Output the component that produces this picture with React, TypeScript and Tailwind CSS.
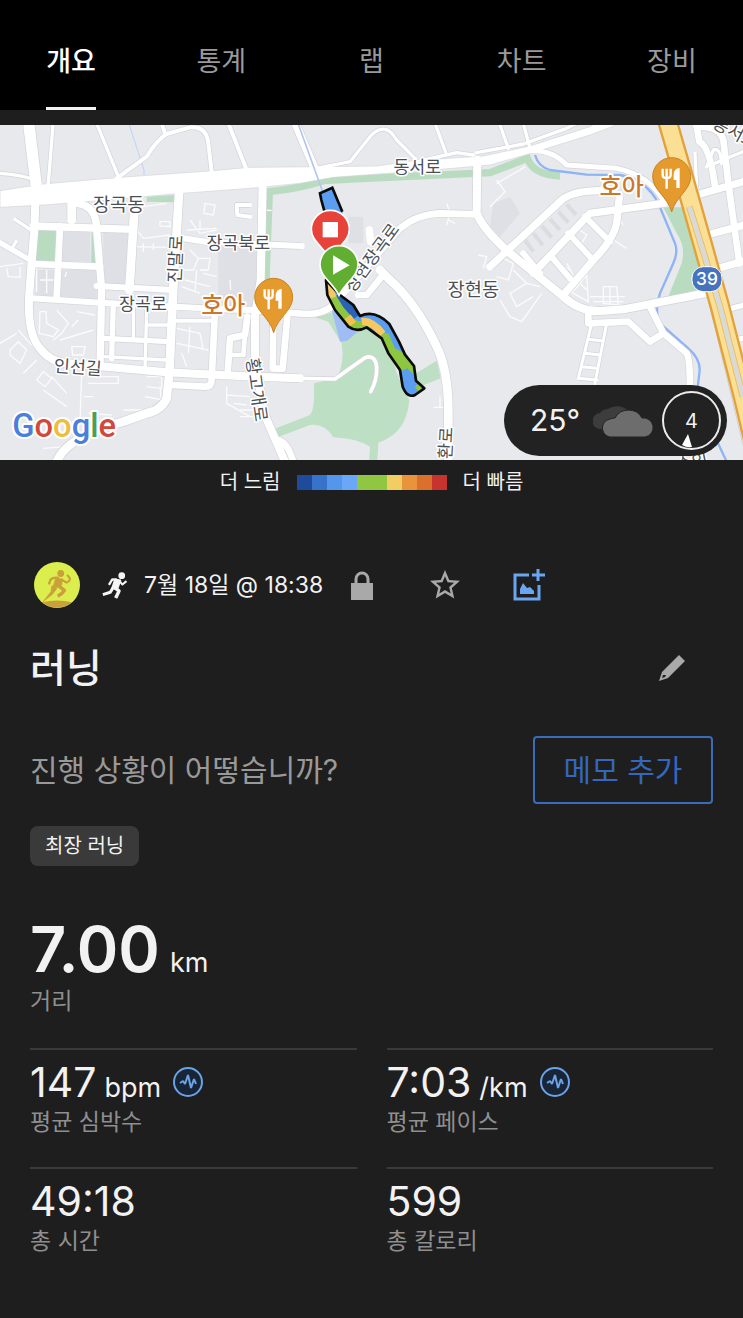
import { useState } from "react";
import { MdStarBorder } from "react-icons/md";

const tabs = ["개요", "통계", "랩", "차트", "장비"];

const paceColors = [
  { id: 1, className: "bg-[#1f4b9c]" },
  { id: 2, className: "bg-[#3773cb]" },
  { id: 3, className: "bg-[#5496eb]" },
  { id: 4, className: "bg-[#6aa8f7]" },
  { id: 5, className: "bg-[#8fc743]" },
  { id: 6, className: "bg-[#8fc743]" },
  { id: 7, className: "bg-[#f2cd62]" },
  { id: 8, className: "bg-[#e9933d]" },
  { id: 9, className: "bg-[#db702d]" },
  { id: 10, className: "bg-[#c6342d]" },
];

const stats = [
  { label: "평균 심박수", value: "147", unit: "bpm", chart: true },
  { label: "평균 페이스", value: "7:03", unit: "/km", chart: true },
  { label: "총 시간", value: "49:18" },
  { label: "총 칼로리", value: "599" },
];

// map roads, drawn twice: grey casing first, then the white surface
const roads = [
  { w: 34, d: "M85,0 L108,190" },
  { w: 24, d: "M108,190 L103,330 L97,400 L88,520 Q80,640 120,685 Q150,725 200,730 L500,757 L765,770 L900,775" },
  { w: 11, d: "M900,775 L1005,777 L1095,713 Q1125,703 1130,740 Q1132,780 1112,815" },
  { w: 22, d: "M100,318 L400,328" },
  { w: 26, d: "M405,240 L395,400 L388,510" },
  { w: 20, d: "M100,432 L300,440" },
  { w: 20, d: "M180,320 L170,530" },
  { w: 26, d: "M215,250 L215,300" },
  { w: 22, d: "M230,250 Q290,255 290,330 L305,510 L300,740" },
  { w: 18, d: "M290,498 L520,510" },
  { w: 18, d: "M95,535 L300,548 L640,566" },
  { w: 20, d: "M640,566 L750,570 L920,582 Q970,582 1000,555 L1200,325 Q1250,283 1320,280 L1430,283" },
  { w: 20, d: "M1075,525 L1100,525 L1145,470" },
  { w: 26, d: "M1140,450 L1170,480 Q1250,550 1315,690 Q1345,760 1345,880 L1345,1020" },
  { w: 24, d: "M1432,120 L1430,280 Q1450,330 1530,400 L1690,530 Q1740,575 1800,573 L1870,568 L2125,518" },
  { w: 26, d: "M538,205 L520,500 L508,760 L500,835 Q485,870 440,880 L370,905 Q200,950 170,1025" },
  { w: 18, d: "M550,355 L620,366 L905,378" },
  { w: 24, d: "M788,190 L782,480 L765,590 L765,720 L792,880 L855,1025" },
  { w: 20, d: "M830,960 Q860,960 880,1025" },
  { w: 20, d: "M820,600 L818,745 L848,746 L862,590" },
  { w: 20, d: "M645,570 L635,780 Q635,800 615,800 L515,795" },
  { w: 20, d: "M683,760 L690,655 L735,645 L742,590" },
  { w: 14, d: "M735,645 L730,705 L695,705" },
  { w: 12, d: "M520,602 L635,602" },
  { w: 16, d: "M340,550 L335,715" },
  { w: 16, d: "M310,655 L510,665" },
  { w: 10, d: "M310,710 L500,720" },
  { w: 10, d: "M400,560 L400,655 M440,570 L435,750 M440,615 L505,615" },
  { w: 10, d: "M160,0 L145,190 M290,10 L355,170 M0,160 Q70,165 105,180" },
  { w: 12, d: "M350,175 L440,110 Q470,60 500,42 L570,22 Q620,18 625,70 L635,155 M485,10 L495,40 M685,10 L738,145" },
  { w: 16, d: "M0,368 L90,420" },
  { w: 10, d: "M45,298 L90,328 M38,382 L48,365" },
  { w: 10, d: "M950,145 L1050,125 L1110,50 Q1155,0 1190,60 L1245,115 M1305,10 L1340,105 M1250,125 L1370,98 L1420,105" },
  { w: 24, d: "M886,10 L948,155" },
  { w: 10, d: "M1430,98 L1570,72 L1700,25 L1750,0 M1500,15 L1525,85 M1570,10 L1590,85" },
  { w: 12, d: "M750,255 L710,255 L712,285 L750,290" },
  { w: 22, d: "M1470,440 L1685,240 Q1720,212 1800,212" },
  { w: 22, d: "M1600,460 L1770,280 L1990,250" },
  { w: 22, d: "M1858,230 L1850,310 Q1840,360 1780,420 L1690,525" },
  { w: 18, d: "M1570,400 L1620,460 M1650,405 L1710,475 M1705,340 L1770,410 M1755,290 L1830,365" },
  { w: 15, d: "M1600,92 Q1660,92 1700,135 L1850,145 Q1950,165 1995,250" },
  { w: 20, d: "M1765,575 L1765,610 L1885,605 L1950,665 L1990,640 L1950,560 M1990,640 L2060,700 Q2070,715 2070,810" },
  { w: 9, d: "M1775,610 L1735,775 M1820,610 L1785,790 M1765,658 L1810,663 M1755,700 L1800,705 M1745,740 L1790,745 M1735,775 L1790,780" },
  { w: 22, d: "M2080,228 L2229,185 M2110,348 L2229,316 M2150,446 L2229,424" },
  { w: 16, d: "M2175,570 L2229,556 M2205,660 L2229,655" },
  { w: 20, d: "M2090,20 L2098,65 Q2130,80 2145,200 M2100,20 Q2160,20 2170,60 L2185,190 L2218,430" },
  { w: 10, d: "M2085,100 L2090,205 M2145,130 L2229,95 M2120,140 L2140,90 Q2160,80 2165,130" },
];

const lanes =
  "M20,445 L25,470 L60,472 L60,440 M0,440 L70,430 M110,445 L110,515 M140,450 L140,520 M120,480 L165,480 M200,455 L195,470 M120,575 L118,640 L160,650 L175,630 L140,610 L138,575 Z M170,570 L205,610 L185,640 L160,660 M230,575 L285,585 M235,600 L215,620 M180,660 L280,630 M215,680 L255,680 L250,705 L218,705 Z M55,630 L90,670 L150,720 M0,670 L50,640 M30,690 L55,665 L80,690 L60,730 L30,705 Z M70,760 L110,720 M110,780 L130,755 L155,775 L135,800 Z M130,810 L200,860 M155,770 L200,820 M245,760 L240,900 M265,770 L355,770 L355,790 L265,790 M250,830 L280,830 M265,880 L335,885 M440,770 L485,770 L485,805 L440,800 M480,800 L485,855 M435,830 L490,840 M370,870 L440,870 M430,260 L500,250 M410,330 L430,355 L510,345 M410,380 L500,382 M480,305 L510,305 L510,320 L480,318 Z M430,370 L430,395 M460,370 L460,390 M615,250 L645,255 L640,285 L612,280 Z M570,300 L600,340 L650,330 M600,300 L600,330 M560,330 L650,325 M570,390 L595,415 L580,450 L550,450 M595,415 L630,415 L625,450 L600,450 M590,450 L585,515 M555,480 L630,500 M610,460 L650,470 M545,500 L600,520 M530,625 L600,640 M570,620 L565,700 M530,670 L625,690 M600,640 L610,690 M545,700 L560,740 M680,800 L680,850 L750,890 M680,825 L750,830 M700,850 L740,855 M690,480 L692,510 M795,270 L815,272 M1340,250 L1350,280 L1340,315 M1345,300 L1365,310 M1435,405 L1460,410 L1450,445 M1320,830 L1320,865 M1300,862 L1330,862 M1500,410 L1540,430 L1525,480 L1490,470 M1500,540 L1530,590 L1565,605 L1625,520 M1540,450 L1580,490 L1530,520 L1550,560 M1580,490 L1620,500 M1550,560 L1600,530 M1490,190 L1560,150 L1575,140 M1490,180 L1515,215 L1470,260 M1740,330 L1760,345 L1745,370 M1690,440 L1710,450 M1700,430 L1720,465 M1715,520 L1760,465 L1765,545 L1720,520 M1740,490 L1760,510 M1810,500 L1850,500 L1855,555 L1810,550 Z M1770,530 L1875,530 M1780,545 L1870,545 M1830,500 L1830,550 M1840,360 L1880,385 M1860,300 L1870,315 M720,870 L760,870 M720,890 L780,890 M130,985 L200,980";

const hatch =
  "M1575,360 L1600,395 M1600,340 L1628,375 M1625,318 L1655,352 M1650,297 L1680,330 M1675,275 L1705,308 M1700,253 L1728,284";

const river =
  "M1605,105 Q1615,140 1650,150 L1760,164 L1860,165 Q1940,180 1975,250 L2025,370 Q2035,395 2020,430 L1980,520 Q1960,580 1985,615 L2065,685 Q2105,720 2098,760 L2092,810 L2140,940 L2180,1025";

const highway = "M2000,-5 L2045,150 L2110,380 L2160,560 L2229,830 L2265,980";

const trackOutline =
  "M978,480 L982,525 L1005,570 L1045,620 Q1070,638 1100,622 L1145,655 L1165,700 L1200,750 L1208,800 Q1222,835 1245,825 L1273,805 L1248,782 L1242,738 L1215,704 L1197,665 L1168,612 Q1125,568 1080,588 L1060,555 L1020,525 Z";

const Pin = ({ x, y, fill, children }: { x: number; y: number; fill: string; children: React.ReactNode }) => (
  <g transform={`translate(${x} ${y})`}>
    <path
      d="M-57,0 A57,57 0 0 1 57,0 C57,36 20,52 0,92 C-20,52 -57,36 -57,0 Z"
      fill={fill}
      stroke="#fff"
      strokeWidth="5"
    />
    {children}
  </g>
);

const FoodPin = ({ x, y }: { x: number; y: number }) => (
  <g transform={`translate(${x} ${y})`}>
    <path
      d="M-57,0 A57,57 0 0 1 57,0 C57,40 12,60 0,106 C-12,60 -57,40 -57,0 Z"
      fill="#e59a2e"
      stroke="#c98422"
      strokeWidth="3"
    />
    <path
      d="M-27,-24 V-6 Q-27,4 -15,4 Q-3,4 -3,-6 V-24 M-15,-24 V36"
      fill="none"
      stroke="#fff"
      strokeWidth="7"
    />
    <path d="M24,-26 V34 H14 V10 H6 V-8 Q8,-24 24,-26 Z" fill="#fff" />
  </g>
);

const ActivityMap = () => (
  <svg viewBox="0 15 2229 1005" className="block w-full" role="img" aria-label="지도">
    <defs>
      <clipPath id="track">
        <path d={trackOutline} />
      </clipPath>
    </defs>
    <rect y="15" width="2229" height="1005" fill="#e8e9ed" />

    {/* city blocks */}
    <path
      d="M310,335 H385 L378,495 L310,490 Z M190,335 H270 V425 H186 Z M110,450 H290 V540 H105 Z M655,380 H770 V560 H655 Z M1480,250 L1530,230 L1560,280 L1500,350 L1470,320 Z M1045,290 H1090 V370 H1045 Z"
      fill="#dfe0e5"
    />
    <path d="M110,330 L170,333 L165,425 L105,420 Z" fill="#b9dcc0" />
    <path d="M275,335 L288,350 L288,430 L273,430 Z M440,230 L525,225 L525,247 L440,245 Z" fill="#b9dcc0" />
    <path
      d="M798,480 L808,215 Q900,205 970,182 L1100,175 L1470,158 L1582,115 Q1600,165 1680,168"
      fill="none"
      stroke="#b9dcc0"
      strokeWidth="22"
    />
    <path
      d="M945,592 L1005,575 L1060,610 L1160,630 L1190,760 L1228,840 Q1220,940 1135,968 L1132,1020 L1108,1020 L1110,980 Q1070,955 1000,952 Q975,910 930,915 L825,955 L815,930 L930,885 Q945,870 942,790 L1010,775 Q1035,730 1025,670 L985,605 Z"
      fill="#bddfc4"
    />
    <path d="M1240,765 L1310,722 L1322,775 L1255,802 Z" fill="#bddfc4" />
    <path d="M995,570 L1085,625 L1042,662 L1020,665 Z" fill="#9fbcf6" />
    <path d="M1990,262 L2060,262 L2130,515 L2005,530 L2045,430 Q2058,380 2030,340 Z" fill="#b9dcc0" />
    <path d={river} fill="none" stroke="#8db4f5" strokeWidth="7" />
    <path d="M388,15 L432,150 L432,165" fill="none" stroke="#bcd3f5" strokeWidth="3" />
    <path d="M2125,540 L2240,1020" stroke="#cfd2d6" strokeWidth="3" />

    <path d={lanes} fill="none" stroke="#fbfbfc" strokeWidth="4" />

    {roads.map((road) => (
      <path key={road.d} d={road.d} fill="none" stroke="#d2d4d9" strokeWidth={road.w + 4} strokeLinejoin="round" />
    ))}
    <path
      d="M0,212 L130,192 L360,172 L640,152 L750,142 L960,140 L1130,138 L1240,122 L1450,108 L1590,78 L1770,20 L1800,0 L1890,0 L1770,45 L1600,98 L1470,135 L1300,150 L1000,172 L900,190 L750,205 L520,222 L250,246 L130,255 L0,262 Z"
      fill="#fff"
      stroke="#d2d4d9"
      strokeWidth="2"
    />
    {roads.map((road) => (
      <path
        key={road.d}
        d={road.d}
        fill="none"
        stroke="#fff"
        strokeWidth={road.w}
        strokeLinejoin="round"
        strokeLinecap="round"
      />
    ))}
    <path d={hatch} stroke="#dadce0" strokeWidth="12" />
    <path d="M1108,330 L1112,365" stroke="#fff" strokeWidth="22" strokeLinecap="round" />
    <path d="M896,15 L968,215" stroke="#b4c5ee" strokeWidth="5" />

    {/* highway 39 */}
    <path d={highway} fill="none" stroke="#e2a13a" strokeWidth="62" />
    <path d={highway} fill="none" stroke="#fadf94" strokeWidth="48" />
    <path d="M2068,260 L2110,395 L2160,560 L2229,830" fill="none" stroke="#e9bb5c" strokeWidth="20" />
    <path d="M2068,260 L2110,395 L2160,560 L2229,830" fill="none" stroke="#d9dad6" strokeWidth="15" />

    <g
      fill="#4c4f54"
      stroke="#fff"
      strokeWidth="9"
      strokeLinejoin="round"
      paintOrder="stroke"
      fontSize="52"
      textAnchor="middle"
    >
      <text x="356" y="274" fontSize="56">장곡동</text>
      <text x="715" y="386">장곡북로</text>
      <text x="429" y="570">장곡로</text>
      <text transform="translate(232 760) rotate(4)">인선길</text>
      <text x="1252" y="160">동서로</text>
      <text x="1420" y="528" fontSize="56">장현동</text>
      <text transform="translate(545 418) rotate(-87)">진말로</text>
      <text transform="translate(1130 424) rotate(-54)">장현장곡로</text>
      <text transform="translate(752 812) rotate(82)">황고개로</text>
      <text transform="translate(1356 970) rotate(-87)">환로</text>
      <text transform="translate(2198 55) rotate(28)">동서로</text>
      <text transform="translate(2080 1044) rotate(-12)">수인</text>
    </g>
    <g
      fill="#cd772b"
      stroke="#fff"
      strokeWidth="10"
      strokeLinejoin="round"
      paintOrder="stroke"
      fontSize="72"
      fontWeight="500"
      textAnchor="middle"
    >
      <text x="670" y="582">호아</text>
      <text x="1865" y="224">호아</text>
    </g>

    {/* recorded track */}
    <path d="M960,220 L997,203 L1027,275 L1030,310 L985,310 L964,240 Z" fill="#5b9df0" />
    <path d="M975,280 L964,240 L960,220 L997,203 L1027,275" fill="none" stroke="#0b0b0b" strokeWidth="8" />
    <g clipPath="url(#track)">
      <rect x="960" y="470" width="330" height="380" fill="#5b9df0" />
      <path d="M1020,520 L1070,590" stroke="#2a62b8" strokeWidth="36" />
      <path
        d="M980,480 L990,535 L1015,575 L1050,615 L1080,625 L1110,622"
        fill="none"
        stroke="#8dc63f"
        strokeWidth="40"
      />
      <path d="M978,490 L995,535" stroke="#f2c766" strokeWidth="30" />
      <path d="M1042,608 L1060,595" stroke="#f2c24e" strokeWidth="28" />
      <path d="M1135,640 L1165,640 L1185,685 L1250,720 L1250,775 L1222,745 L1190,760 Z" fill="#8dc63f" />
      <path d="M1085,605 Q1115,600 1148,642" fill="none" stroke="#f5c860" strokeWidth="22" />
      <path d="M1245,800 L1262,785 L1280,800 L1268,820 L1252,812 Z" fill="#8dc63f" />
    </g>
    <path d={trackOutline} fill="none" stroke="#0b0b0b" strokeWidth="8" strokeLinejoin="round" />

    <FoodPin x={821} y={532} />
    <FoodPin x={2015} y={170} />
    <Pin x={991} y={328} fill="#e8433a">
      <rect x="-23" y="-22" width="46" height="46" fill="#fff" />
    </Pin>
    <Pin x={1017} y={434} fill="#61ae30">
      <path d="M-18,-28 L32,2 L-18,30 Z" fill="#fff" />
    </Pin>

    <rect x="2076" y="440" width="90" height="75" rx="34" fill="#4673bd" stroke="#fff" strokeWidth="3" />
    <text x="2121" y="496" fill="#fff" fontSize="52" fontWeight="500" textAnchor="middle">39</text>

    <text
      x="37"
      y="952"
      className="font-['Roboto']"
      fontSize="98"
      fontWeight="500"
      stroke="#fff"
      strokeWidth="12"
      strokeLinejoin="round"
      paintOrder="stroke"
    >
      <tspan fill="#4a7fdc">G</tspan>
      <tspan fill="#d0493c">o</tspan>
      <tspan fill="#edbd3e">o</tspan>
      <tspan fill="#4a7fdc">g</tspan>
      <tspan fill="#4a9f58">l</tspan>
      <tspan fill="#d0493c">e</tspan>
    </text>
  </svg>
);

const Weather = () => (
  <div className="absolute right-4 bottom-1 flex h-[71px] w-[223px] items-center justify-between rounded-full bg-[#222222] pr-[6px] pl-[26px] text-[#f2f2f2]">
    <span className="text-[30px]">25°</span>
    <svg viewBox="0 0 60 34" className="ml-1 h-[34px] w-[60px]">
      <path d="M8,25 A8,8 0 0 1 7,9 A10,10 0 0 1 15,5 A14,12 0 0 1 35,7 L30,25 Z" fill="#3d3d3d" />
      <path
        d="M20,33 A9,9 0 0 1 17,15 Q20,14 22,14 A15,14 0 0 1 49,14 A9,9 0 0 1 52,33 Z"
        fill="#6d6d6d"
        stroke="#222222"
        strokeWidth="1"
      />
    </svg>
    <span className="relative flex size-[59px] items-center justify-center rounded-full border-2 border-[#ececec] text-xl">
      4
      <svg viewBox="0 0 10 14" className="absolute bottom-0 left-[18px] h-[14px] w-[10px]">
        <path d="M6,0 L10,13 Q5,14 0,11 Z" fill="#fff" />
      </svg>
    </span>
  </div>
);

const ChartIcon = () => (
  <svg viewBox="0 0 30 30" className="size-[30px]" fill="none" stroke="#6ba3e8">
    <circle cx="15" cy="15" r="14" strokeWidth="2" fill="#182536" />
    <path d="M7,16 L10,14 L12,17 L15,8 L18,21 L21,12 L23,17" strokeWidth="2" strokeLinejoin="bevel" />
  </svg>
);

const Avatar = () => (
  <svg viewBox="0 0 136 136" className="size-[46px]">
    <circle cx="68" cy="68" r="68" fill="#dcee4e" />
    <path d="M24,119 Q68,108 112,119 A68,68 0 0 1 24,119 Z" fill="#c9a03a" />
    <g fill="none" stroke="#c9a03a" strokeLinejoin="round">
      <circle cx="79" cy="34" r="10" fill="#c9a03a" stroke="none" />
      <path d="M74,47 Q57,44 49,52 L44,66" strokeWidth="7" />
      <path d="M82,52 L96,61 Q107,57 106,48 L98,38" strokeWidth="6" />
      <path d="M64,48 L84,50 L82,68 L66,76 L57,72 Z" fill="#c9a03a" strokeWidth="2" />
      <path d="M72,70 L90,84 Q84,94 70,101" strokeWidth="10" />
      <path d="M53,70 L68,78 L54,96 L27,117 L50,88 Z" fill="#c9a03a" strokeWidth="2" />
    </g>
  </svg>
);

const Runner = () => (
  <svg viewBox="0 0 76 80" className="h-[27px] w-[26px]" fill="none" stroke="#f5f5f5" strokeLinejoin="round">
    <circle cx="58" cy="11" r="10" fill="#f5f5f5" stroke="none" />
    <path d="M44,23 L30,22 L20,38" strokeWidth="7" />
    <path d="M52,28 L60,37 L72,27" strokeWidth="6" />
    <path d="M38,22 L54,25 L46,48 L30,46 Z" fill="#f5f5f5" strokeWidth="5" />
    <path d="M36,46 L50,56 L40,77" strokeWidth="10" />
    <path d="M34,44 L24,60 L2,67" strokeWidth="9" />
  </svg>
);

const App = () => {
  const [activeTab, setActiveTab] = useState("개요");

  return (
    <div className="min-h-screen overflow-hidden bg-[#1e1e1e] pb-12 font-['Inter','Noto_Sans_CJK_KR',sans-serif] text-[#f2f2f2]">
      <header className="bg-black pt-[38px]">
        <nav className="-mx-1 grid grid-cols-5 justify-items-center">
          {tabs.map((tab) => (
            <button
              key={tab}
              onClick={() => setActiveTab(tab)}
              className={
                tab === activeTab
                  ? "border-b-3 border-[#f2f2f2] pb-[21px] text-[27px] leading-[48px] font-medium text-white"
                  : "border-b-3 border-transparent pb-[21px] text-[27px] leading-[48px] text-[#9a9a9a]"
              }
            >
              {tab}
            </button>
          ))}
        </nav>
      </header>

      <section className="relative mt-[15px]">
        <ActivityMap />
        <Weather />
      </section>

      <div className="flex h-11 items-center justify-center gap-4 text-xl">
        <span>더 느림</span>
        <div className="flex">
          {paceColors.map((color) => (
            <span key={color.id} className={`h-[15px] w-[15px] ${color.className}`} />
          ))}
        </div>
        <span>더 빠름</span>
      </div>

      <main className="px-[30px]">
        <div className="mt-14 flex h-[50px] items-center pl-1">
          <Avatar />
          <div className="ml-[22px]">
            <Runner />
          </div>
          <span className="ml-4 text-[23px]">7월 18일 @ 18:38</span>
          <button aria-label="개인정보" className="ml-7">
            <svg viewBox="0 0 22 29" className="h-[29px] w-[22px]">
              <rect y="12" width="22" height="17" fill="#a9a9a9" />
              <path d="M5,13 V8 A6,6 0 0 1 17,8 V13" fill="none" stroke="#a9a9a9" strokeWidth="3" />
            </svg>
          </button>
          <button aria-label="즐겨찾기" className="ml-[54px]">
            <MdStarBorder className="size-[36px] text-[#a9a9a9]" />
          </button>
          <button aria-label="사진 추가" className="ml-[50px]">
            <svg viewBox="0 0 32 32" className="size-8" fill="none" stroke="#6aa5f2" strokeWidth="3">
              <path d="M16,6 H2 V30 H26 V16" />
              <path d="M25,0 V12 M19,6 H32" />
              <path d="M7,25 V20 L10,14 L14,19 L17,18 L21,22 V25 Z" fill="#6aa5f2" stroke="none" />
            </svg>
          </button>
        </div>

        <div className="mt-[30px] flex h-14 items-center justify-between pr-7">
          <h1 className="text-[39px] leading-[56px] font-medium">러닝</h1>
          <button aria-label="편집">
            <svg viewBox="0 0 26 26" className="size-[26px]">
              <path
                d="M20,0 L26,6 L9,23 L0,26 L3,17 Z M4,20 L3,23 L6,22 L7,20 L6,20 Z"
                fill="#a9a9a9"
                fillRule="evenodd"
              />
            </svg>
          </button>
        </div>

        <div className="mt-10 flex items-center justify-between">
          <p className="text-[30px] text-[#999999]">진행 상황이 어떻습니까?</p>
          <button className="h-[68px] w-[180px] rounded border-2 border-[#3b6cb7] text-[30px] text-[#3467bd]">
            메모 추가
          </button>
        </div>

        <div className="mt-[22px] flex">
          <span className="flex h-10 items-center rounded-lg bg-[#3a3a3a] px-[15px] text-xl">최장 러닝</span>
        </div>

        <div className="mt-[51px] flex h-16 items-baseline gap-2.5">
          <span className="text-[63px] leading-[64px] font-semibold">7.00</span>
          <span className="text-[27px] leading-8">km</span>
        </div>
        <p className="mt-1 text-[23px] leading-8 text-[#8f8f8f]">거리</p>

        <div className="mt-[31px] grid grid-cols-2 gap-x-[30px]">
          {stats.map((stat) => (
            <div key={stat.label} className="border-t-2 border-[#3a3a3a] pt-2 pb-[29px]">
              <div className="flex h-12 items-center gap-3">
                <p className="flex items-baseline gap-2">
                  <span className="text-[41px] leading-[48px]">{stat.value}</span>
                  {stat.unit && <span className="text-[27px] leading-8">{stat.unit}</span>}
                </p>
                {stat.chart && <ChartIcon />}
              </div>
              <p className="text-[23px] leading-8 text-[#8f8f8f]">{stat.label}</p>
            </div>
          ))}
        </div>
      </main>
    </div>
  );
};

export default App;
